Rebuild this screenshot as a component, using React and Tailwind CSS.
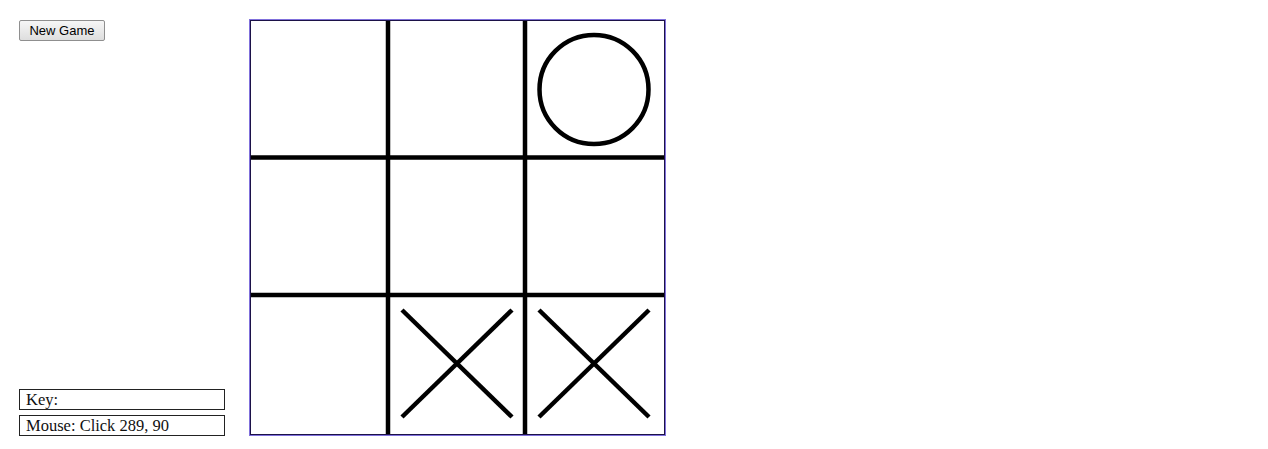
import React from "react";

export default function App() {
  return (
    <div className="w-[1268px] h-[449px] bg-white flex items-start pl-[19px] pt-[19px] gap-[24px]">
      <div className="w-[206px] h-[417px] flex flex-col justify-between">
        <button className="mt-[1px] self-start w-[86px] h-[21px] text-[13px] leading-[19px] text-black border border-[#8f8f8f] rounded-[2px] bg-gradient-to-b from-[#f6f6f6] to-[#dedede]" style={{ fontFamily: '"Liberation Sans", Arial, sans-serif' }}>
          New Game
        </button>
        <div className="flex flex-col gap-[5px]" style={{ fontFamily: '"Liberation Serif", "Times New Roman", serif' }}>
          <div className="h-[21px] border border-[#222] pl-[6px] text-[16.5px] leading-[19px] text-[#111]">Key:</div>
          <div className="h-[21px] border border-[#222] pl-[6px] text-[16.5px] leading-[19px] text-[#111]">Mouse: Click 289, 90</div>
        </div>
      </div>
      <div className="w-[417px] h-[417px] border border-[#8070dc]">
        <div className="w-full h-full border border-[#1c1248] bg-white">
          <svg width="413" height="413" viewBox="0 0 413 413">
            <g transform="translate(-251,-21)" stroke="#000" strokeWidth="4.5" fill="none">
              <line x1="388" y1="19" x2="388" y2="436" />
              <line x1="525" y1="19" x2="525" y2="436" />
              <line x1="249" y1="157.5" x2="666" y2="157.5" />
              <line x1="249" y1="295" x2="666" y2="295" />
              <circle cx="594" cy="89.5" r="54.5" />
              <line x1="402" y1="310" x2="512" y2="417" />
              <line x1="512" y1="310" x2="402" y2="417" />
              <line x1="539" y1="310" x2="649" y2="417" />
              <line x1="649" y1="310" x2="539" y2="417" />
            </g>
          </svg>
        </div>
      </div>
    </div>
  );
}
